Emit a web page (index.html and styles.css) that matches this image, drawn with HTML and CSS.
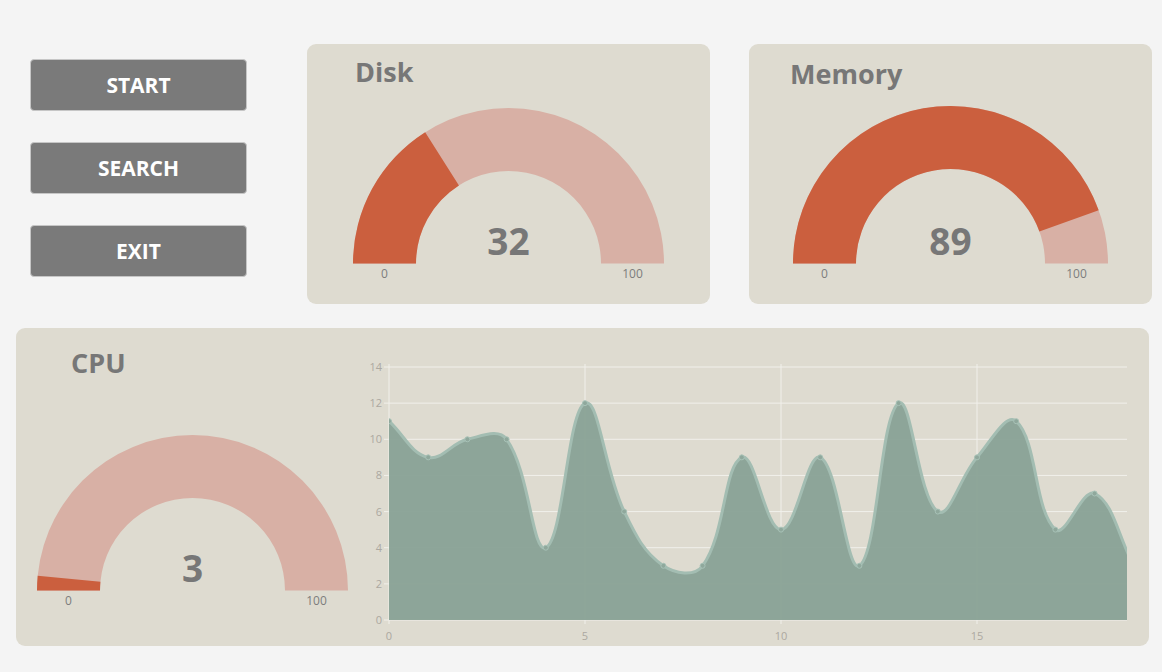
FILE: index.html
```html
<!DOCTYPE html>
<html lang="en">
<head>
<meta charset="utf-8">
<title>System Monitor</title>
<link rel="stylesheet" href="styles.css">
</head>
<body>
<div class="top">
  <div class="controls">
    <button class="btn">START</button>
    <button class="btn">SEARCH</button>
    <button class="btn">EXIT</button>
  </div>

  <section class="panel panel-small disk">
    <h2 class="title">Disk</h2>
    <svg class="gauge" width="403" height="190" viewBox="0 0 403 190">
      <path class="g-bg" d="M46 159.5 A155.5 155.5 0 0 1 357 159.5 L294 159.5 A92.5 92.5 0 0 0 109 159.5 Z"/>
      <path class="g-val" d="M46 159.5 A155.5 155.5 0 0 1 118.18 28.21 L151.94 81.4 A92.5 92.5 0 0 0 109 159.5 Z"/>
      <text class="g-num" x="201.5" y="151">32</text>
      <text class="g-lbl" x="77.5" y="173.5">0</text>
      <text class="g-lbl" x="325.5" y="173.5">100</text>
    </svg>
  </section>

  <section class="panel panel-small memory">
    <h2 class="title">Memory</h2>
    <svg class="gauge" width="403" height="190" viewBox="0 0 403 190">
      <path class="g-bg" d="M44 159.5 A157.5 157.5 0 0 1 359 159.5 L296 159.5 A94.5 94.5 0 0 0 107 159.5 Z"/>
      <path class="g-val" d="M44 159.5 A157.5 157.5 0 0 1 349.69 106.15 L290.41 127.49 A94.5 94.5 0 0 0 107 159.5 Z"/>
      <text class="g-num" x="201.5" y="151">89</text>
      <text class="g-lbl" x="75.5" y="173.5">0</text>
      <text class="g-lbl" x="327.5" y="173.5">100</text>
    </svg>
  </section>
</div>

<section class="panel cpu">
  <div class="cpu-left">
    <h2 class="title">CPU</h2>
    <svg class="gauge" width="353" height="200" viewBox="0 0 353 200">
      <path class="g-bg" d="M21 172.5 A155.5 155.5 0 0 1 332 172.5 L269 172.5 A92.5 92.5 0 0 0 84 172.5 Z"/>
      <path class="g-val" d="M21 172.5 A155.5 155.5 0 0 1 21.69 157.87 L84.41 163.79 A92.5 92.5 0 0 0 84 172.5 Z"/>
      <text class="g-num" x="176.5" y="164">3</text>
      <text class="g-lbl" x="52.5" y="186.5">0</text>
      <text class="g-lbl" x="300.5" y="186.5">100</text>
    </svg>
  </div>
  <svg class="chart" width="780" height="318" viewBox="0 0 780 318">
    <defs>
      <clipPath id="plot-clip"><rect x="20" y="0" width="738" height="292"/></clipPath>
    </defs>
    <g class="grid">
      <line x1="15" y1="292" x2="758" y2="292"/>
      <line x1="15" y1="255.86" x2="758" y2="255.86"/>
      <line x1="15" y1="219.71" x2="758" y2="219.71"/>
      <line x1="15" y1="183.57" x2="758" y2="183.57"/>
      <line x1="15" y1="147.43" x2="758" y2="147.43"/>
      <line x1="15" y1="111.29" x2="758" y2="111.29"/>
      <line x1="15" y1="75.14" x2="758" y2="75.14"/>
      <line x1="15" y1="39" x2="758" y2="39"/>
      <line x1="20" y1="36" x2="20" y2="296"/>
      <line x1="216" y1="36" x2="216" y2="296"/>
      <line x1="412" y1="36" x2="412" y2="296"/>
      <line x1="608" y1="36" x2="608" y2="296"/>
    </g>
    <g class="ylabels">
      <text x="13" y="296">0</text>
      <text x="13" y="259.86">2</text>
      <text x="13" y="223.71">4</text>
      <text x="13" y="187.57">6</text>
      <text x="13" y="151.43">8</text>
      <text x="13" y="115.29">10</text>
      <text x="13" y="79.14">12</text>
      <text x="13" y="43">14</text>
    </g>
    <g class="xlabels">
      <text x="20" y="312">0</text>
      <text x="216" y="312">5</text>
      <text x="412" y="312">10</text>
      <text x="608" y="312">15</text>
    </g>
    <g clip-path="url(#plot-clip)">
      <path id="cpu-area" class="area" d=""/>
      <path id="cpu-line" class="line" d=""/>
      <g id="cpu-points" class="points"></g>
    </g>
  </svg>
</section>
<script src="script.js"></script>
</body>
</html>
```

FILE: styles.css
```css
* { box-sizing: border-box; }

body {
  margin: 0;
  width: 1162px;
  height: 672px;
  overflow: hidden;
  background: #f4f4f4;
  font-family: "Open Sans", "Noto Sans", sans-serif;
}

.top {
  display: flex;
  align-items: flex-start;
  padding: 44px 0 0 30px;
}

.controls {
  display: flex;
  flex-direction: column;
  gap: 31px;
  width: 217px;
  margin-top: 15px;
}

.btn {
  height: 52px;
  padding: 0;
  background: #7a7a7a;
  color: #ffffff;
  border: 1px solid #c6c6c6;
  border-radius: 4px;
  font: 700 21px/1 "Open Sans", sans-serif;
  display: flex;
  align-items: center;
  justify-content: center;
}

.panel {
  background: #dedbd0;
  border-radius: 9px;
}

.panel-small {
  width: 403px;
  height: 260px;
}

.disk { margin-left: 60px; }
.memory { margin-left: 39px; }

.title {
  margin: 0;
  height: 60px;
  font: 700 27px/32px "Open Sans", sans-serif;
  color: #777777;
}

.disk .title { padding: 12px 0 0 48px; }
.memory .title { padding: 14px 0 0 41px; }

.gauge { display: block; }

.g-bg { fill: #d8b0a5; }
.g-val { fill: #cb5f3e; }

.g-num {
  font: 700 37px "Open Sans", sans-serif;
  fill: #777777;
  text-anchor: middle;
}

.g-lbl {
  font: 400 12px "Open Sans", sans-serif;
  fill: #7d7d7d;
  text-anchor: middle;
}

.cpu {
  display: flex;
  width: 1133px;
  height: 318px;
  margin: 24px 0 0 16px;
}

.cpu-left {
  width: 353px;
  flex: none;
}

.cpu .title {
  height: 90px;
  padding: 19px 0 0 55px;
}

.chart {
  display: block;
  flex: none;
}

.grid line {
  stroke: #f1f0eb;
  stroke-width: 1;
}

.ylabels text {
  font: 400 11px "Open Sans", sans-serif;
  fill: #aca8a0;
  text-anchor: end;
}

.xlabels text {
  font: 400 11px "Open Sans", sans-serif;
  fill: #aca8a0;
  text-anchor: middle;
}

.area {
  fill: #8aa397;
  fill-opacity: 0.97;
}

.line {
  fill: none;
  stroke: #a3bdb2;
  stroke-width: 3;
}

.points circle {
  fill: #8fa89c;
  stroke: #a8c2b7;
  stroke-width: 1;
}
```

FILE: script.js
```js
(function () {
  var data = [11, 9, 10, 10, 4, 12, 6, 3, 3, 9, 5, 9, 3, 12, 6, 9, 11, 5, 7, 3];
  var L = 20, R = 758, T = 39, B = 292;
  var xStep = 39.2;
  var yUnit = (B - T) / 14;
  var tension = 0.4;

  var pts = data.map(function (v, i) {
    return { x: L + i * xStep, y: B - v * yUnit };
  });

  var cps = pts.map(function (p, i) {
    var prev = pts[i - 1] || p;
    var next = pts[i + 1] || p;
    var d01 = Math.hypot(p.x - prev.x, p.y - prev.y);
    var d12 = Math.hypot(next.x - p.x, next.y - p.y);
    var s = d01 + d12;
    var s01 = s ? d01 / s : 0;
    var s12 = s ? d12 / s : 0;
    var fa = tension * s01;
    var fb = tension * s12;
    return {
      px: p.x - fa * (next.x - prev.x),
      py: p.y - fa * (next.y - prev.y),
      nx: p.x + fb * (next.x - prev.x),
      ny: p.y + fb * (next.y - prev.y)
    };
  });

  function capY(y) { return Math.max(T, Math.min(B, y)); }
  function f(n) { return n.toFixed(2); }

  var d = 'M' + f(pts[0].x) + ' ' + f(pts[0].y);
  for (var i = 1; i < pts.length; i++) {
    d += ' C' + f(cps[i - 1].nx) + ' ' + f(capY(cps[i - 1].ny)) +
         ' ' + f(cps[i].px) + ' ' + f(capY(cps[i].py)) +
         ' ' + f(pts[i].x) + ' ' + f(pts[i].y);
  }

  document.getElementById('cpu-line').setAttribute('d', d);
  var last = pts[pts.length - 1];
  document.getElementById('cpu-area').setAttribute('d',
    d + ' L' + f(last.x) + ' ' + B + ' L' + L + ' ' + B + ' Z');

  var g = document.getElementById('cpu-points');
  pts.forEach(function (p) {
    var c = document.createElementNS('http://www.w3.org/2000/svg', 'circle');
    c.setAttribute('cx', f(p.x));
    c.setAttribute('cy', f(p.y));
    c.setAttribute('r', '2.5');
    g.appendChild(c);
  });
})();
```
